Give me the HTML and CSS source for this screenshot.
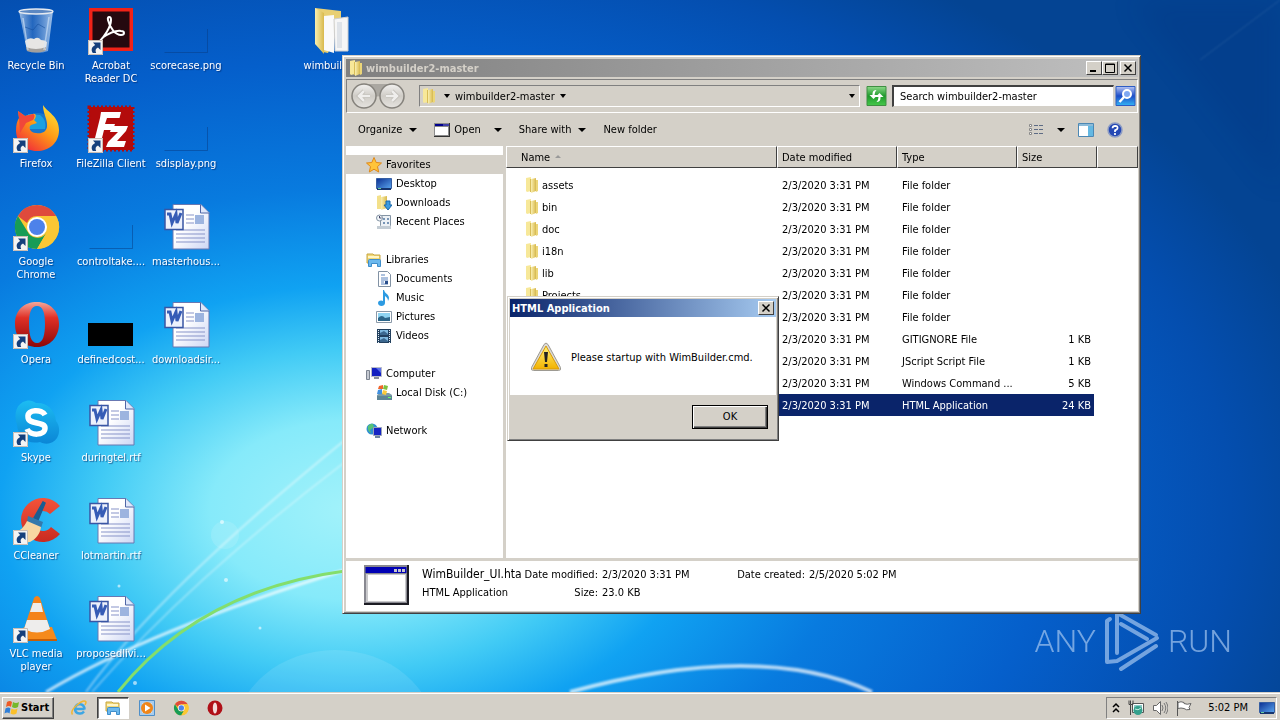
FILE: index.html
```html
<!DOCTYPE html>
<html lang="en">
<head>
<meta charset="utf-8">
<title>wimbuilder2-master</title>
<link rel="stylesheet" href="styles.css">
</head>
<body>
<svg class="sprite" aria-hidden="true">
  <defs>
    <linearGradient id="g-page" x1="0" y1="0" x2="1" y2="1"><stop offset="0.4" stop-color="#fff"/><stop offset="1" stop-color="#cdd6f4"/></linearGradient>
    <linearGradient id="g-fold" x1="0" y1="0" x2="1" y2="0"><stop offset="0" stop-color="#f9efb0"/><stop offset="1" stop-color="#d9b94c"/></linearGradient>
    <linearGradient id="g-opera" x1="0" y1="0" x2="0" y2="1"><stop offset="0" stop-color="#f4a79a"/><stop offset="0.35" stop-color="#e03026"/><stop offset="1" stop-color="#8c0808"/></linearGradient>
    <linearGradient id="g-fox" x1="0.9" y1="0" x2="0.2" y2="1"><stop offset="0" stop-color="#ffe83a"/><stop offset="0.5" stop-color="#ff9a16"/><stop offset="1" stop-color="#f0263c"/></linearGradient>
    <linearGradient id="g-skype" x1="0" y1="0" x2="0" y2="1"><stop offset="0" stop-color="#1cbcf2"/><stop offset="1" stop-color="#0b86d6"/></linearGradient>
    <linearGradient id="g-bin" x1="0" y1="0" x2="1" y2="0"><stop offset="0" stop-color="#b9d2ee" stop-opacity=".85"/><stop offset="0.4" stop-color="#3f78c4" stop-opacity=".55"/><stop offset="1" stop-color="#bdd6f2" stop-opacity=".85"/></linearGradient>
    <linearGradient id="g-screen" x1="0" y1="0" x2="1" y2="1"><stop offset="0" stop-color="#0b2f92"/><stop offset="1" stop-color="#5aa5ee"/></linearGradient>
    <linearGradient id="g-warn" x1="0" y1="0" x2="0" y2="1"><stop offset="0" stop-color="#fff27a"/><stop offset="1" stop-color="#f2b200"/></linearGradient>
    <linearGradient id="g-nav" x1="0" y1="0" x2="0" y2="1"><stop offset="0" stop-color="#f3f2f0"/><stop offset="0.5" stop-color="#cfccc6"/><stop offset="1" stop-color="#e6e4e0"/></linearGradient>
    <linearGradient id="g-green" x1="0" y1="0" x2="0" y2="1"><stop offset="0" stop-color="#8ed98a"/><stop offset="0.5" stop-color="#1e9a2c"/><stop offset="1" stop-color="#46c84a"/></linearGradient>
    <linearGradient id="g-blue" x1="0" y1="0" x2="0" y2="1"><stop offset="0" stop-color="#b8c6f4"/><stop offset="0.5" stop-color="#1c4cc8"/><stop offset="1" stop-color="#34b4f4"/></linearGradient>
    <linearGradient id="g-cc" x1="0" y1="0" x2="0" y2="1"><stop offset="0" stop-color="#f4533a"/><stop offset="1" stop-color="#c92a20"/></linearGradient>
  </defs>
  <symbol id="shortcut" viewBox="0 0 15 15"><path d="M0 0h15v15H0z" fill="#f4f4f4"/><path d="M.5.5h14v14H.5z" fill="none" stroke="#c9bdb5"/><path d="M5 2.500h7.500V10L10 7.600C7.500 9 7 10.500 8.200 13H4.800C2.500 9.500 4 6.500 7.200 4.900z" fill="#153f7c"/></symbol>
  <symbol id="bin" viewBox="0 0 48 48"><path d="M7 4h34L36 44q-10 4-21 0z" fill="url(#g-bin)"/><path d="M13 34q4-4 9-2 4-3 7 1 4 0 6 2l-1 8q-9 4-19 0z" fill="#e7e6e4"/><path d="M14 40q10 4 20 0l-1 4q-9 3-18 0z" fill="#a3a09c"/><path d="M11 11l5 32M37 10l-5 33" stroke="#d6e6f8" stroke-width="1.500" opacity=".6"/><path d="M13 20l8 3 5-6 7 4" stroke="#164f9e" fill="none" opacity=".6"/><ellipse cx="24" cy="4.500" rx="17" ry="2.500" fill="#5c88c2" stroke="#e5eaf0" stroke-width="1.300"/></symbol>
  <symbol id="acrobat" viewBox="0 0 48 48"><path d="M2 1h44v43H2z" fill="#f02218"/><path d="M5.500 4.500h37v36h-37z" fill="#25090f"/><path d="M12 35C17 30 24 20 24 13c0-4-4-4-3 0 2 9 8 15 13 15 4 0 4-4 0-4-6-1-13 3-19 7" fill="none" stroke="#fff" stroke-width="2"/></symbol>
  <symbol id="firefox" viewBox="0 0 48 48"><circle cx="26" cy="22" r="14" fill="#1976ca"/><path d="M28 10q7 5 5 14H17L16 9z" fill="#1ba0e0"/><path d="M31 0c4 7 16 11 16 25C47 38 37 46 25 46 12 46 4 37 4 25c0-5 1-9 3-12l-1-7 7 5 8-2c3-1 4 3 1 6l3 3-6 2c-3 2-1 8 5 8 6 1 10-1 11-6 1-7-4-13-4-22z" fill="url(#g-fox)"/><path d="M7 13L6 6l7 5 8-2c2 0 2 3 0 6l-7 3-6 10z" fill="#f0473a"/></symbol>
  <symbol id="filezilla" viewBox="0 0 48 48"><path d="M2 2h44v43H2z" fill="#b30b0b" stroke="#b30b0b" stroke-width="3" stroke-dasharray="2 2"/><path d="M14 7h20l-1.500 6H20l-2 6h10l-2 6H17l-3 12H7l6-24zM25 21h16l-2 5-9 10h9l-2 6H19l2-5 10-10h-8z" fill="#fff"/></symbol>
  <symbol id="chrome" viewBox="0 0 48 48"><circle cx="25" cy="24" r="22" fill="#fbc734"/><path d="M5.900 13A22 22 0 0 1 44.100 13H25a11 11 0 0 0-10 7z" fill="#df4a3c"/><path d="M5.900 13A22 22 0 0 0 25 46l10-17a11 11 0 0 1-18 2z" fill="#179c56"/><path d="M25 46A22 22 0 0 0 44.100 13H25a11 11 0 0 1 9.500 16.500z" fill="#fbc734"/><circle cx="25" cy="24" r="10" fill="#fff"/><circle cx="25" cy="24" r="8" fill="#4d82ea"/></symbol>
  <symbol id="opera" viewBox="0 0 48 48"><path fill-rule="evenodd" d="M25 1C38 1 47 10 47 23S38 46 25 46 3 37 3 23 12 1 25 1zm0 4c-6 0-8 7-8 18s2 19 8 19 8-8 8-19-2-18-8-18z" fill="url(#g-opera)"/></symbol>
  <symbol id="skype" viewBox="0 0 48 48"><path d="M14 2c4-1 7 0 10 2 10-1 19 6 20 18 4 5 4 12 1 17-4 6-11 7-17 4C15 46 6 37 5 26 1 14 5 4 14 2z" fill="url(#g-skype)"/><path d="M33 16c-3-6-18-6-17 2 0 8 17 4 17 11 0 8-15 8-18 1" fill="none" stroke="#fff" stroke-width="5.500"/></symbol>
  <symbol id="ccleaner" viewBox="0 0 48 48"><path d="M48 9A22 22 0 1 0 48 37l-9-7a10 10 0 1 1-1-13z" fill="url(#g-cc)"/><path d="M31 5l2 1-7 17-4-2z" fill="#1b5d92" stroke="#1b5d92" stroke-width="1.500"/><path d="M16 19l15 6-2 6-14-6z" fill="#3579ac"/><path d="M15 24l14 6c-1 7-5 12-11 15-5 1-12-3-16-10 6 0 10-5 13-11z" fill="#f8d7a2"/></symbol>
  <symbol id="vlc" viewBox="0 0 48 48"><path d="M12 32h28l5 13-1 1H6l-1-1z" fill="#f58a1c"/><path d="M5 44h40v2H5z" fill="#c75e06"/><path d="M22 3q3-4 6 0l10 31q-13 8-26 0z" fill="#f4831a"/><path d="M21 8h8l2 9H18zM15 25h20l3 9q-13 7-26 0z" fill="#eeedec"/></symbol>
  <symbol id="word" viewBox="0 0 48 48"><path d="M11 1.500h28l8 8V46H11z" fill="url(#g-page)" stroke="#6878b2"/><path d="M38.500 2v8H47" fill="#dfe7fa" stroke="#5066a6"/><path d="M24 12h8M24 16h8M24 20h8M14 27h29M14 31h29M14 35h29M14 39h29" stroke="#8793c8"/><path d="M33 12h9v9h-9z" fill="#9db4df"/><path d="M3 6.500h18v20H3z" fill="#edf1fc" stroke="#3956a4" stroke-width="1.500"/><path d="M5 11h3l2 9 4-9 1 9 4-10" fill="none" stroke="#365cb6" stroke-width="3"/></symbol>
  <symbol id="thumb" viewBox="0 0 48 48"><path d="M2.500 45.500h43V22" fill="none" stroke="#083c84" stroke-opacity=".5"/></symbol>
  <symbol id="black" viewBox="0 0 48 48"><path d="M1 22h45v23H1z"/></symbol>
  <symbol id="bigfolder" viewBox="0 0 48 48"><path d="M3 1l26 3v12L16 46 11 45 3 35z" fill="#e8cf73"/><path d="M12 9l10-1v38l-10-3z" fill="#fafafa"/><path d="M22 12l14-2v34H23z" fill="#f6f6f6" stroke="#cfcfcf"/><path d="M25 15h5v26h-5z" fill="#dfe3e8"/><path d="M3 1l9 5v41L3 37z" fill="url(#g-fold)"/></symbol>
  <symbol id="folder" viewBox="0 0 16 16"><path d="M2 1l5-1v14l-4 1-1-1z" fill="#f7e899"/><path d="M7 2l5-1v13l-5 2z" fill="url(#g-fold)"/><path d="M12 3h2v11l-2 1z" fill="#ecd678"/><path d="M6.500 2v13M11.500 3v11" stroke="#d8bd58"/></symbol>
  <symbol id="star" viewBox="0 0 16 16"><path d="M8 .5l2.200 5 5.300.5-4 3.600 1.200 5.400L8 12.200 3.300 15l1.200-5.400L.5 6l5.300-.5z" fill="#ffc43a" stroke="#e08818"/></symbol>
  <symbol id="desktop" viewBox="0 0 16 16"><path d="M.5 2.500h15v10H.5z" fill="url(#g-screen)" stroke="#365ea2"/><path d="M1 12h14v2H1z" fill="#16346e"/><path d="M2 12.500h3" stroke="#6c9"/></symbol>
  <symbol id="downloads" viewBox="0 0 16 16"><path d="M1 1l4-1v14l-4 0z" fill="#f3e08a"/><path d="M5 2l6-1v12l-6 2z" fill="url(#g-fold)"/><path d="M10 6h4v4h2l-4 5-4-5h2z" fill="#3b9be0" stroke="#1766a8"/></symbol>
  <symbol id="recent" viewBox="0 0 16 16"><path d="M4.500 1.500h10v10l-2 3h-10l2-3z" fill="#edf1f5" stroke="#8494a4"/><path d="M7 4h2v2H7zm4 0h2v2h-2zM7 8h2v2H7zm4 0h2v2h-2z" fill="#7895b6"/><path d="M1 12h14v3H1z" fill="#c3ccd4"/><circle cx="3.500" cy="4" r="3" fill="#f2f6fa" stroke="#8494a4"/><path d="M3.500 2v2h2" fill="none" stroke="#446"/></symbol>
  <symbol id="libraries" viewBox="0 0 16 16"><path d="M1 2h6l1 1h6v8H1z" fill="#f1d978" stroke="#c7a642"/><path d="M2 5h11" stroke="#fff6c8" stroke-width="2"/><path d="M2.500 14.500V8.500q0-1 1-1h10q1 0 1 1v6h-3v-3h-6v3z" fill="#6cb9ee" stroke="#3f8ecb"/></symbol>
  <symbol id="document" viewBox="0 0 16 16"><path d="M2.500.5h9l3 3v12h-12z" fill="#fff" stroke="#8292a4"/><path d="M5 4h4M5 7h7M5 9h7M5 11h3M5 13h7" stroke="#5a83be"/><path d="M9 10h3v3H9z" fill="#2a4f8c"/></symbol>
  <symbol id="music" viewBox="0 0 16 16"><path d="M8 0c1 4 5 4 5 8 0 1-.5 2-1 3 0-3-2-4-3-5v7c0 4-7 4-7 0 0-3 4-3 5-2V0z" fill="#2d9be2"/></symbol>
  <symbol id="pictures" viewBox="0 0 16 16"><path d="M.5 2.500h15v11H.5z" fill="#fff" stroke="#8a99a8"/><path d="M2 4h12v8H2z" fill="#8fd4f2"/><path d="M2 9q4-4 7 0l5-1v4H2z" fill="#2c668a"/></symbol>
  <symbol id="videos" viewBox="0 0 16 16"><path d="M1 1h14v14H1z" fill="#22405e"/><path d="M4 2h8v5H4zM4 9h8v5H4z" fill="#7fb9df"/><path d="M4 5l4-2 4 3v1H4zM4 12l4-2 4 3v1H4z" fill="#3b678e"/><path d="M2.500 2v13M13.500 2v13" stroke="#dfeaf4" stroke-dasharray="1 1"/></symbol>
  <symbol id="computer" viewBox="0 0 16 16"><path d="M5.500 1.500h10v9h-10z" fill="#1420c0" stroke="#b9bcc8"/><path d="M10 2h5v5z" fill="#5a70ea"/><path d="M8 11h5v2H8z" fill="#8a909c"/><path d="M.5 4.500h3v9h-3z" fill="#c6cad2" stroke="#7c8490"/></symbol>
  <symbol id="disk" viewBox="0 0 16 16"><path d="M1 10l3-2h9l3 2v5H1z" fill="#7b9aa8"/><path d="M1 11h15v4H1z" fill="#5d8496"/><path d="M12 12h3v1h-3z" fill="#6f6"/><path d="M3 1l4-1v4H2z" fill="#f0642a"/><path d="M8 0l4 1-1 4-4-1z" fill="#7fc040"/><path d="M2 5l4-1v5H1z" fill="#3f8fe0"/><path d="M7 5l4 1-1 4-4-1z" fill="#fbc83a"/></symbol>
  <symbol id="network" viewBox="0 0 16 16"><circle cx="6" cy="6" r="5.500" fill="#2f8fd2"/><path d="M2 3q3-3 5-2l1 3-4 3 1 3q-4-2-3-7z" fill="#56c276"/><path d="M7.500 4.500h8v8h-8z" fill="#1624c4" stroke="#9aa4b8"/><path d="M9 13h5v2H9z" fill="#6d84a4"/></symbol>
  <symbol id="appwin" viewBox="0 0 16 14"><path d="M0 0h16v14H0z" fill="#333"/><path d="M0 0h15v13H0z" fill="#8c8c8c"/><path d="M1 1h14v2H1z" fill="#00008c"/><path d="M1 4h13v8H1z" fill="#fff"/><path d="M9.500 2h5" stroke="#fff" stroke-dasharray="1 1"/></symbol>
  <symbol id="bigapp" viewBox="0 0 45 40"><path d="M0 0h45v40H0z" fill="#1c1c24"/><path d="M0 0h43v38H0z" fill="#888890"/><path d="M1.500 2h41v6h-41z" fill="#0000b4"/><path d="M2 9h40v28H2z" fill="#c9c9cc"/><path d="M4 10h37v26H4z" fill="#fff"/><path d="M30 4h3v3h-3zm4 0h3v3h-3zm4 0h3v3h-3z" fill="#c4c4cc"/></symbol>
  <symbol id="navpair" viewBox="0 0 56 28"><path d="M13 2h28v9q-14 7-28 0z" fill="#aaa7a1"/><g fill="url(#g-nav)" stroke="#85827c" stroke-width="1.500"><circle cx="14" cy="14" r="12"/><circle cx="42" cy="14" r="12"/></g><path d="M20 14H9m5-5l-5 5 5 5M36 14h11m-5-5l5 5-5 5" fill="none" stroke="#bebbb5" stroke-width="4"/><path d="M20 14H9m5-5l-5 5 5 5M36 14h11m-5-5l5 5-5 5" fill="none" stroke="#efeeec" stroke-width="2.500"/></symbol>
  <symbol id="refresh" viewBox="0 0 20 20"><path d="M.5.500h19v19H.5z" fill="url(#g-green)" stroke="#3f8f42"/><path d="M10 4Q6 4 6 8v1H3l4 4 4-4H8q0-3 2-5zM10 16q4 0 4-4v-1h3l-4-4-4 4h3q0 3-2 5z" fill="#fff"/></symbol>
  <symbol id="search" viewBox="0 0 20 20"><path d="M.5.500h19v19H.5z" fill="url(#g-blue)" stroke="#2c5cc4"/><circle cx="11.500" cy="8" r="4" fill="#7fa8f2" stroke="#fff" stroke-width="2"/><path d="M8.500 11L4 16" stroke="#fff" stroke-width="2.500"/></symbol>
  <symbol id="views" viewBox="0 0 16 14"><path d="M1.500 1.500h2v2h-2zm0 4h2v2h-2zm0 4h2v2h-2z" fill="#fff" stroke="#888"/><path d="M6 2.500h4m1 0h4M6 6.500h4m1 0h4M6 10.500h4m1 0h4" stroke="#5d6b84"/></symbol>
  <symbol id="pane" viewBox="0 0 16 14"><path d="M.5.500h15v13H.5z" fill="#fff" stroke="#4c88b4"/><path d="M1 1h14v2H1z" fill="#8dbbd8"/><path d="M10 3h5v10h-5z" fill="#64b8e2"/></symbol>
  <symbol id="help" viewBox="0 0 16 16"><circle cx="8" cy="8" r="7" fill="#2548b4" stroke="#8d9cc4" stroke-width="1.500"/><path d="M5.500 6.300q.2-2.500 2.700-2.500 2.500.1 2.400 2.300Q10.400 7.500 8 8.400V10M8 11v2" fill="none" stroke="#fff" stroke-width="1.700"/></symbol>
  <symbol id="warning" viewBox="0 0 32 30"><path d="M14 2.500q2-3 4 0l12.500 23q1 3-2 3h-25q-3 0-2-3z" fill="#dcdad6" stroke="#9d9a92"/><path d="M16 4L29 27H3z" fill="url(#g-warn)" stroke="#d89a08"/><path d="M14 10h4l-1 10h-2zM14.500 22h3v3h-3z" fill="#222"/></symbol>
  <symbol id="flagwin" viewBox="0 0 16 16"><path d="M3 2q3-2 5 0L7 7Q5 5 2 7z" fill="#ee5a24"/><path d="M9 2q3 2 6 0l-1 5q-3 2-6 0z" fill="#76b82a"/><path d="M1.500 8.500q3-2 5 0l-1 5q-2-2-5 0z" fill="#2f7fd8"/><path d="M7.500 8.500q3 2 6 0l-1 5q-3 2-6 0z" fill="#fbc02a"/></symbol>
  <symbol id="ie" viewBox="0 0 16 16"><path d="M13.500 9H4.500M13 11.500Q11 14 8.500 13.500 4 13 4 9T8.500 4q5 .5 5 5.500" fill="none" stroke="#3da6e4" stroke-width="2.500"/><path d="M1.500 14.500Q-1 11 6 5t9-3q0 1-1 3" fill="none" stroke="#f2b632" stroke-width="1.500"/></symbol>
  <symbol id="player" viewBox="0 0 16 16"><path d="M.5.500h15v15H.5z" fill="#a9cdee" stroke="#4f8fc8"/><path d="M3 3h10v10H3z" fill="#d4e8f8"/><circle cx="8" cy="8" r="6" fill="#f0861a"/><path d="M6 4.500L11.500 8 6 11.500z" fill="#fff"/></symbol>
  <symbol id="operasmall" viewBox="0 0 16 16"><circle cx="8" cy="8" r="7.500" fill="#b01018"/><ellipse cx="8" cy="8" rx="2.200" ry="5.500" fill="#f3dcdc"/></symbol>
  <symbol id="traynet" viewBox="0 0 16 16"><path d="M4.500 3.500h11v9h-11z" fill="#fff" stroke="#555"/><path d="M6 5h8v6H6z" fill="#8ac8c4"/><circle cx="10" cy="10.500" r="4.500" fill="#34a08c"/><path d="M7 9q3 2 6-1" stroke="#c5f0e4" fill="none"/><path d="M1 .5v4h1.500V15M5 .5v4H3M2.500.500v4" fill="none" stroke="#444"/></symbol>
  <symbol id="speaker" viewBox="0 0 16 16"><path d="M1.500 5.500h3l4-4v13l-4-4h-3z" fill="#fff" stroke="#666"/><path d="M10 5q2 3 0 6M12 3q3.500 5 0 10M14 2q4 6 0 12" fill="none" stroke="#777"/></symbol>
  <symbol id="flag" viewBox="0 0 16 16"><path d="M1.500 1v15" stroke="#555"/><path d="M2 2.500q3-1.500 6 0v1q3 1.500 7 0l-2 4 1 2q-4 1-6-1-3-1-6 0z" fill="#fff" stroke="#666"/></symbol>
</svg>

<main class="desktop">
  <svg class="wallpaper" viewBox="0 0 1280 692" preserveAspectRatio="none" aria-hidden="true">
    <defs>
      <radialGradient id="sky" gradientUnits="userSpaceOnUse" cx="0" cy="0" r="1" gradientTransform="translate(350 510) scale(1000 640)">
        <stop offset="0" stop-color="#a2f2fa"/><stop offset=".14" stop-color="#86eafa"/><stop offset=".25" stop-color="#42cbf5"/><stop offset=".35" stop-color="#10a2f2"/><stop offset=".5" stop-color="#087bdf"/><stop offset=".7" stop-color="#055fcb"/><stop offset=".88" stop-color="#044eaf"/><stop offset="1" stop-color="#044493"/>
      </radialGradient>
      <filter id="soft"><feGaussianBlur stdDeviation="1"/></filter>
      <filter id="haze" x="-30%" y="-30%" width="160%" height="160%"><feGaussianBlur stdDeviation="14"/></filter>
    </defs>
    <path d="M0 0h1280v692H0z" fill="url(#sky)"/>
    <path d="M1130 0h150v190z" fill="#001e66" opacity=".12" filter="url(#haze)"/>
    <g fill="none" stroke="#fff" filter="url(#soft)">
      <path d="M46 692Q150 630 345 570" stroke-width="3" opacity=".7"/>
      <path d="M86 692Q160 590 345 440" stroke-width="2" opacity=".45"/>
      <path d="M92 692Q190 580 345 462" stroke-width="1.500" opacity=".45"/>
      <path d="M570 692Q760 640 872 692" stroke-width="4" opacity=".7"/>
      <path d="M1200 60L1280 0" opacity=".12"/>
    </g>
    <path d="M118 692Q200 590 345 571" fill="none" stroke="#84de6c" stroke-width="3"/>
    <ellipse cx="335" cy="735" rx="100" ry="85" fill="#fff" opacity=".1"/>
    <g fill="#fff" opacity=".6"><circle cx="222" cy="522" r="2"/><circle cx="119" cy="586" r="1.500"/><circle cx="226" cy="580" r="2"/><circle cx="135" cy="683" r="2"/><circle cx="260" cy="628" r="1.500"/></g>
    <circle cx="225" cy="535" r="14" fill="#fff" opacity=".12"/>
  </svg>

  <ul class="icons">
    <li class="r1 c1"><svg><use href="#bin"/></svg><span>Recycle Bin</span></li>
    <li class="r2 c1"><svg><use href="#firefox"/><use href="#shortcut" x="1" y="33" width="15" height="15"/></svg><span>Firefox</span></li>
    <li class="r3 c1"><svg><use href="#chrome"/><use href="#shortcut" x="1" y="33" width="15" height="15"/></svg><span>Google Chrome</span></li>
    <li class="r4 c1"><svg><use href="#opera"/><use href="#shortcut" x="1" y="33" width="15" height="15"/></svg><span>Opera</span></li>
    <li class="r5 c1"><svg><use href="#skype"/><use href="#shortcut" x="1" y="33" width="15" height="15"/></svg><span>Skype</span></li>
    <li class="r6 c1"><svg><use href="#ccleaner"/><use href="#shortcut" x="1" y="33" width="15" height="15"/></svg><span>CCleaner</span></li>
    <li class="r7 c1"><svg><use href="#vlc"/><use href="#shortcut" x="1" y="33" width="15" height="15"/></svg><span>VLC media player</span></li>
    <li class="r1 c2"><svg><use href="#acrobat"/><use href="#shortcut" x="1" y="33" width="15" height="15"/></svg><span>Acrobat Reader DC</span></li>
    <li class="r2 c2"><svg><use href="#filezilla"/><use href="#shortcut" x="1" y="33" width="15" height="15"/></svg><span>FileZilla Client</span></li>
    <li class="r3 c2"><svg><use href="#thumb"/></svg><span>controltake....</span></li>
    <li class="r4 c2"><svg><use href="#black"/></svg><span>definedcost...</span></li>
    <li class="r5 c2"><svg><use href="#word"/></svg><span>duringtel.rtf</span></li>
    <li class="r6 c2"><svg><use href="#word"/></svg><span>lotmartin.rtf</span></li>
    <li class="r7 c2"><svg><use href="#word"/></svg><span>proposedlivi...</span></li>
    <li class="r1 c3"><svg><use href="#thumb"/></svg><span>scorecase.png</span></li>
    <li class="r2 c3"><svg><use href="#thumb"/></svg><span>sdisplay.png</span></li>
    <li class="r3 c3"><svg><use href="#word"/></svg><span>masterhous...</span></li>
    <li class="r4 c3"><svg><use href="#word"/></svg><span>downloadsir...</span></li>
    <li class="r1 c5"><svg><use href="#bigfolder"/></svg><span>wimbuilder2-</span></li>
  </ul>

  <div class="watermark"><span>ANY</span><svg viewBox="0 0 56 62" aria-hidden="true"><g fill="none" stroke="#a4c6f0" stroke-width="4" stroke-linejoin="round" stroke-linecap="round"><path d="M6 9L3 11V52L13 51 53 28"/><path d="M13 43V3L52 25"/><path d="M17 14L43 29M17 59L52 36"/></g></svg><span>RUN</span></div>

  <section class="window explorer">
    <header class="titlebar">
      <svg><use href="#folder"/></svg><h1>wimbuilder2-master</h1>
      <button class="cap" aria-label="Minimize"><svg viewBox="0 0 10 10"><path d="M1 7h6v2H1z"/></svg></button><button class="cap" aria-label="Maximize"><svg viewBox="0 0 10 10"><path d="M.5 1h9v8.500h-9zM.5 1.500h9" fill="none" stroke="#000"/></svg></button><button class="cap closer" aria-label="Close"><svg viewBox="0 0 10 10"><path d="M1.500 1.500l7 7M8.500 1.500l-7 7" stroke="#000" stroke-width="1.500"/></svg></button>
    </header>
    <nav class="navbar">
      <button class="plain navpair" aria-label="Back and forward"><svg><use href="#navpair"/></svg></button>
      <div class="address"><svg class="i16"><use href="#folder"/></svg><i class="tri"></i><span>wimbuilder2-master</span><i class="tri"></i><i class="tri last"></i></div>
      <button class="plain i20" aria-label="Refresh"><svg><use href="#refresh"/></svg></button>
      <input class="search" type="text" aria-label="Search" placeholder="Search wimbuilder2-master">
      <button class="plain i20" aria-label="Search"><svg><use href="#search"/></svg></button>
    </nav>
    <div class="toolbar">
      <button class="plain tool">Organize<i class="tri"></i></button>
      <button class="plain tool"><svg><use href="#appwin"/></svg>Open</button>
      <button class="plain tool openwith" aria-label="Open with"><i class="tri"></i></button>
      <button class="plain tool">Share with<i class="tri"></i></button>
      <button class="plain tool">New folder</button>
      <div class="right">
        <button class="plain" aria-label="Views"><svg class="i16"><use href="#views"/></svg></button>
        <button class="plain" aria-label="More views"><i class="tri"></i></button>
        <button class="plain" aria-label="Preview pane"><svg class="i16"><use href="#pane"/></svg></button>
        <button class="plain" aria-label="Help"><svg class="i16"><use href="#help"/></svg></button>
      </div>
    </div>
    <div class="content">
      <ul class="tree">
        <li class="top sel"><svg><use href="#star"/></svg>Favorites</li>
        <li><svg><use href="#desktop"/></svg>Desktop</li>
        <li><svg><use href="#downloads"/></svg>Downloads</li>
        <li><svg><use href="#recent"/></svg>Recent Places</li>
        <li class="top gap"><svg><use href="#libraries"/></svg>Libraries</li>
        <li><svg><use href="#document"/></svg>Documents</li>
        <li><svg><use href="#music"/></svg>Music</li>
        <li><svg><use href="#pictures"/></svg>Pictures</li>
        <li><svg><use href="#videos"/></svg>Videos</li>
        <li class="top gap"><svg><use href="#computer"/></svg>Computer</li>
        <li><svg><use href="#disk"/></svg>Local Disk (C:)</li>
        <li class="top gap"><svg><use href="#network"/></svg>Network</li>
      </ul>
      <div class="list">
        <table>
          <colgroup><col><col class="w120"><col class="w120"><col class="w80"><col class="w40"></colgroup>
          <thead><tr><th class="first">Name <i class="up"></i></th><th>Date modified</th><th>Type</th><th>Size</th><th></th></tr></thead>
          <tbody>
            <tr class="spacer"><td colspan="5"></td></tr>
            <tr><td class="name"><svg><use href="#folder"/></svg>assets</td><td>2/3/2020 3:31 PM</td><td>File folder</td><td></td><td></td></tr>
            <tr><td class="name"><svg><use href="#folder"/></svg>bin</td><td>2/3/2020 3:31 PM</td><td>File folder</td><td></td><td></td></tr>
            <tr><td class="name"><svg><use href="#folder"/></svg>doc</td><td>2/3/2020 3:31 PM</td><td>File folder</td><td></td><td></td></tr>
            <tr><td class="name"><svg><use href="#folder"/></svg>i18n</td><td>2/3/2020 3:31 PM</td><td>File folder</td><td></td><td></td></tr>
            <tr><td class="name"><svg><use href="#folder"/></svg>lib</td><td>2/3/2020 3:31 PM</td><td>File folder</td><td></td><td></td></tr>
            <tr><td class="name"><svg><use href="#folder"/></svg>Projects</td><td>2/3/2020 3:31 PM</td><td>File folder</td><td></td><td></td></tr>
            <tr><td></td><td>2/3/2020 3:31 PM</td><td>File folder</td><td></td><td></td></tr>
            <tr><td></td><td>2/3/2020 3:31 PM</td><td>GITIGNORE File</td><td class="size">1 KB</td><td></td></tr>
            <tr><td></td><td>2/3/2020 3:31 PM</td><td>JScript Script File</td><td class="size">1 KB</td><td></td></tr>
            <tr><td></td><td>2/3/2020 3:31 PM</td><td>Windows Command ...</td><td class="size">5 KB</td><td></td></tr>
            <tr class="picked"><td></td><td>2/3/2020 3:31 PM</td><td>HTML Application</td><td class="size">24 KB</td><td></td></tr>
          </tbody>
        </table>
      </div>
    </div>
    <footer class="details">
      <svg><use href="#bigapp"/></svg>
      <div class="facts">
        <span class="big">WimBuilder_UI.hta</span><span class="key">Date modified:</span><span>2/3/2020 3:31 PM</span><span class="key">Date created:</span><span>2/5/2020 5:02 PM</span>
        <span>HTML Application</span><span class="key">Size:</span><span>23.0 KB</span>
      </div>
    </footer>
  </section>

  <section class="window dialog" role="dialog" aria-labelledby="dlg">
    <header class="titlebar active"><h2 id="dlg">HTML Application</h2><button class="cap" aria-label="Close"><svg viewBox="0 0 10 10"><path d="M1.500 1.500l7 7M8.500 1.500l-7 7" stroke="#000" stroke-width="1.500"/></svg></button></header>
    <div class="message"><svg><use href="#warning"/></svg><p>Please startup with WimBuilder.cmd.</p></div>
    <div class="actions"><button class="ok">OK</button></div>
  </section>
</main>

<footer class="taskbar">
  <button class="start"><svg><use href="#flagwin"/></svg>Start</button>
  <div class="tasks">
    <button class="plain task" aria-label="Internet Explorer"><svg><use href="#ie"/></svg></button>
    <button class="plain task on" aria-label="Explorer"><svg><use href="#libraries"/></svg></button>
    <button class="plain task" aria-label="Media Player"><svg><use href="#player"/></svg></button>
    <button class="plain task" aria-label="Chrome"><svg viewBox="0 0 48 48"><use href="#chrome"/></svg></button>
    <button class="plain task" aria-label="Opera"><svg><use href="#operasmall"/></svg></button>
  </div>
  <div class="tray">
    <svg class="chev" viewBox="0 0 8 12"><path d="M1 5l3-3 3 3M1 10l3-3 3 3" fill="none" stroke="#000" stroke-width="1.500"/></svg>
    <svg><use href="#traynet"/></svg><svg><use href="#speaker"/></svg><svg><use href="#flag"/></svg>
    <time>5:02 PM</time><svg><use href="#desktop"/></svg>
  </div>
</footer>
</body>
</html>
```
FILE: styles.css
```css
* { box-sizing: border-box; }
body {
  margin: 0;
  height: 100vh;
  display: flex;
  flex-direction: column;
  overflow: hidden;
  font: 11px/13px "DejaVu Sans Condensed", "Liberation Sans", sans-serif;
  color: #000;
}
button, input { font: inherit; color: inherit; }
h1, h2, p, ul { margin: 0; padding: 0; }
ul { list-style: none; }
svg { display: block; flex: none; width: 16px; height: 16px; }
.sprite { position: absolute; width: 0; height: 0; }

.desktop { position: relative; flex: 1; min-height: 0; overflow: hidden; }
.wallpaper { position: absolute; inset: 0; width: 100%; height: 100%; }
.icons {
  position: relative;
  display: grid;
  grid-template-columns: repeat(5, 75px);
  grid-template-rows: repeat(7, 98px);
  color: #fff;
  text-align: center;
}
.icons li { display: flex; flex-direction: column; align-items: center; gap: 4px; padding: 7px 3px 0 0; min-width: 0; }
.icons svg { width: 48px; height: 48px; }
.icons span { text-shadow: 1px 1px 1px rgba(0, 30, 90, .6); }
.r1 { grid-row: 1; } .r2 { grid-row: 2; } .r3 { grid-row: 3; } .r4 { grid-row: 4; }
.r5 { grid-row: 5; } .r6 { grid-row: 6; } .r7 { grid-row: 7; }
.c1 { grid-column: 1; } .c2 { grid-column: 2; } .c3 { grid-column: 3; } .c5 { grid-column: 5; }

.window {
  position: absolute;
  display: flex;
  flex-direction: column;
  background: #d4d0c8;
  border: 1px solid;
  border-color: #d4d0c8 #404040 #404040 #d4d0c8;
  box-shadow: inset 1px 1px #fff, inset -1px -1px #808080;
}
.explorer { left: 342px; top: 55px; width: 799px; height: 559px; padding: 3px 2px 2px 3px; }
.dialog { left: 507px; top: 296px; width: 272px; height: 145px; padding: 2px; }

.titlebar {
  display: flex;
  align-items: center;
  height: 18px;
  flex: none;
  padding: 0 2px;
  gap: 2px;
  color: #d4d0c8;
  background: linear-gradient(90deg, #808080, #c0c0c0);
}
.titlebar h1, .titlebar h2 { flex: 1; font-size: 11px; line-height: 13px; }
.titlebar.active { color: #fff; background: linear-gradient(90deg, #0a246a, #a6caf0); }
.cap {
  display: grid;
  place-items: center;
  width: 16px;
  height: 14px;
  padding: 0;
  margin-left: -2px;
  background: #d4d0c8;
  border: 1px solid;
  border-color: #fff #404040 #404040 #fff;
}
.cap.closer { margin-left: 0; }
.cap svg { width: 10px; height: 10px; }

.plain { display: flex; align-items: center; justify-content: center; padding: 0; border: 0; background: none; }
.tri { border: 3px solid transparent; border-top: 4px solid #000; border-bottom: 0; }

.navbar {
  display: flex;
  align-items: center;
  height: 34px;
  flex: none;
  margin-top: 2px;
  padding: 0 1px 0 3px;
  border: 1px solid;
  border-color: #808080 #fff #fff #808080;
}
.navpair, .navpair svg { width: 56px; height: 28px; }
.address {
  flex: 1;
  display: flex;
  align-items: center;
  gap: 5px;
  height: 22px;
  margin: 0 6px 0 13px;
  padding: 0 4px 0 1px;
  border: 1px solid;
  border-color: #808080 #fff #fff #808080;
}
.address .i16 { margin-right: 2px; }
.address .last { margin-left: auto; }
.i16 { width: 16px; height: 16px; }
.i20, .i20 svg { width: 21px; height: 20px; }
.search {
  width: 222px;
  height: 22px;
  margin: 0 1px 0 5px;
  padding: 0 6px;
  background: #fff;
  border: 1px solid;
  border-color: #404040 #d4d0c8 #d4d0c8 #404040;
  border-left-width: 2px;
  border-top-width: 2px;
}
.search::placeholder { color: #000; opacity: 1; }

.toolbar { display: flex; align-items: center; height: 33px; flex: none; padding-left: 12px; }
.toolbar .tri { border-width: 4px 4px 0; }
.tool { gap: 7px; margin-right: 17px; white-space: nowrap; }
.tool svg { height: 14px; margin-right: -3px; }
.tool + .openwith { margin: 0 17px 0 -4px; }
.toolbar .right { flex: 1; display: flex; justify-content: flex-end; align-items: center; gap: 13px; padding-right: 15px; }

.content { flex: 1; min-height: 0; display: flex; gap: 3px; }
.tree { width: 157px; padding: 8px 0; background: #fff; border-top: 1px solid #fff; }
.tree li { display: flex; align-items: center; gap: 4px; height: 19px; padding-left: 30px; }
.tree .top { padding-left: 20px; }
.tree .sel { background: #d4d0c8; }
.tree .gap { margin-top: 19px; }
.list { flex: 1; min-width: 0; background: #fff; }
table { width: 100%; table-layout: fixed; border-collapse: separate; border-spacing: 0; }
.w120 { width: 120px; } .w80 { width: 80px; } .w40 { width: 41px; }
th {
  height: 22px;
  padding: 0 4px;
  font-weight: normal;
  text-align: left;
  background: #d4d0c8;
  border: 1px solid;
  border-color: #fff #404040 #404040 #fff;
}
th.first { padding-left: 14px; }
.up { display: inline-block; vertical-align: 3px; margin-left: 2px; border: 3px solid transparent; border-bottom-color: #999; border-top: 0; }
td { height: 22px; padding: 0 5px; white-space: nowrap; }
.spacer td { height: 6px; }
.name { display: flex; align-items: center; gap: 2px; padding-left: 18px; }
.size { text-align: right; padding-right: 3px; border-right: 3px solid #fff; }
.picked { color: #fff; }
.picked td { background: #0a246a; }
.picked td:first-child { border-left: 4px solid #fff; }
.picked td:last-child { background: #fff; }

.details { display: flex; flex: none; gap: 13px; height: 50px; margin-top: 3px; padding: 4px 18px; background: #fff; }
.details svg { width: 45px; height: 40px; }
.facts {
  display: grid;
  grid-template-columns: 102px 78px 132px 75px 1fr;
  grid-template-rows: 18px 18px;
  align-items: center;
  flex: 1;
  white-space: nowrap;
}
.big { font-size: 12px; }
.key { text-align: right; padding-right: 4px; }

.message { flex: 1; display: flex; align-items: center; gap: 9px; padding: 2px 0 0 20px; background: #fff; }
.message svg { width: 32px; height: 30px; }
.actions { height: 43px; display: flex; align-items: center; justify-content: flex-end; padding-right: 8px; }
.ok {
  width: 76px;
  height: 24px;
  padding: 0;
  background: #d4d0c8;
  border: 1px solid #000;
  box-shadow: inset 1px 1px #fff, inset -1px -1px #404040, inset -2px -2px #808080;
}

.watermark {
  position: absolute;
  right: 48px;
  bottom: 20px;
  display: flex;
  align-items: center;
  gap: 8px;
  font: 300 32px/40px "Roboto", sans-serif;
  color: #a4c6f0;
  opacity: .7;
}
.watermark svg { width: 56px; height: 62px; }

.taskbar {
  display: flex;
  align-items: center;
  height: 28px;
  flex: none;
  padding: 2px 3px 0 2px;
  background: #d4d0c8;
  border-top: 1px solid #d4d0c8;
  box-shadow: inset 0 1px #fff;
}
.start {
  display: flex;
  align-items: center;
  width: 52px;
  height: 22px;
  gap: 1px;
  padding: 0 1px;
  font-weight: bold;
  background: #d4d0c8;
  border: 1px solid;
  border-color: #fff #404040 #404040 #fff;
  box-shadow: inset -1px -1px #808080;
}
.tasks { flex: 1; display: flex; gap: 2px; padding-left: 9px; }
.task { width: 32px; height: 22px; }
.task.on { background: #fff; border: 1px solid; border-color: #404040 #fff #fff #404040; box-shadow: inset 1px 1px #808080; }
.tray {
  display: flex;
  align-items: center;
  gap: 8px;
  height: 22px;
  padding: 0 1px 0 5px;
  border: 1px solid;
  border-color: #808080 #fff #fff #808080;
}
.tray .chev { width: 8px; height: 12px; }
.tray time { padding: 0 3px 0 8px; }
```
